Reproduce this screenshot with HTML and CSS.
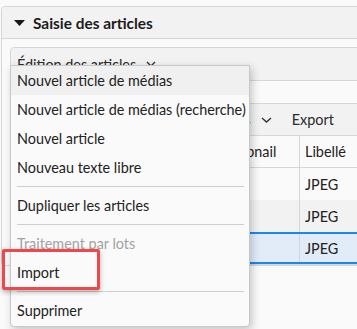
FILE: index.html
```html
<!DOCTYPE html>
<html lang="fr">
<head>
<meta charset="utf-8">
<link rel="stylesheet" href="styles.css">
</head>
<body>
<div class="panel">
  <div class="panel-head">
    <svg class="tri" width="11" height="6" viewBox="0 0 11 6"><path d="M0 0H11L5.5 6Z" fill="#1a1a1a"/></svg>
    <span class="title">Saisie des articles</span>
  </div>
  <div class="panel-body">
    <div class="grid">
      <div class="tb tb1">
        <span class="btn">Édition des articles <svg class="chev" width="10" height="6" viewBox="0 0 10 6"><path d="M1 1L5 5L9 1" fill="none" stroke="#333" stroke-width="1.4"/></svg></span>
      </div>
      <div class="tb tb2"></div>
      <div class="tb tb3">
        <span class="btn">Actions <svg class="chev" width="11" height="6" viewBox="0 0 11 6"><path d="M1 1L5.5 5L10 1" fill="none" stroke="#333" stroke-width="1.4"/></svg></span>
        <span class="btn">Export</span>
      </div>
      <div class="table">
        <div class="row head"><div class="c c1"></div><div class="c c2">Thumbnail</div><div class="c c3">Libellé</div></div>
        <div class="row"><div class="c c1"></div><div class="c c2"></div><div class="c c3">JPEG</div></div>
        <div class="row alt"><div class="c c1"></div><div class="c c2"></div><div class="c c3">JPEG</div></div>
        <div class="row sel"><div class="c c1"></div><div class="c c2"></div><div class="c c3">JPEG</div></div>
      </div>
    </div>
  </div>
</div>

<div class="menu">
  <div class="item hover">Nouvel article de médias</div>
  <div class="item">Nouvel article de médias (recherche)</div>
  <div class="item">Nouvel article</div>
  <div class="item">Nouveau texte libre</div>
  <div class="sep"></div>
  <div class="item">Dupliquer les articles</div>
  <div class="sep"></div>
  <div class="item disabled">Traitement par lots</div>
  <div class="item">Import</div>
  <div class="sep"></div>
  <div class="item">Supprimer</div>
</div>
<div class="mark"></div>
</body>
</html>
```
FILE: styles.css
```css
html, body {
  margin: 0;
  padding: 0;
}
body {
  width: 357px;
  height: 329px;
  overflow: hidden;
  background: #fafafa;
  font-family: Lato, "Open Sans", sans-serif;
  font-size: 14.4px;
  color: #222;
  position: relative;
}
.panel {
  margin: 6px 0 0 1px;
  width: 420px;
  border: 1px solid #d6d6d6;
  border-radius: 4px;
}
.panel-head {
  height: 31px;
  background: #f2f2f2;
  border-bottom: 1px solid #d6d6d6;
  border-radius: 4px 0 0 0;
  display: flex;
  align-items: center;
  padding-left: 12px;
  gap: 8px;
}
.tri { display: block; margin-top: 1px; }
.title {
  font-weight: 700;
  font-size: 15.4px;
  color: #1c1c1c;
}
.panel-body {
  padding: 8px 0 0 8px;
}
.grid {
  border: 1px solid #d6d6d6;
  border-radius: 4px 0 0 0;
}
.tb {
  display: flex;
  align-items: center;
  border-bottom: 1px solid #d6d6d6;
}
.tb1 {
  height: 32px;
  background: #f2f2f2;
  border-radius: 4px 0 0 0;
  padding-left: 6px;
}
.tb2 {
  height: 22px;
  background: #fafafa;
}
.tb3 {
  height: 31px;
  background: #f2f2f2;
  padding-left: 192px;
  gap: 20px;
}
.btn {
  display: flex;
  align-items: center;
  gap: 10px;
  color: #2a2a2a;
}
.chev { display: block; }
.row {
  display: flex;
  height: 32px;
  background: #fafafa;
}
.row.head {
  height: 31px;
  border-bottom: 1px solid #d6d6d6;
}
.row.alt { background: #f2f2f2; }
.row.sel {
  height: 28px;
  background: #e1ecf8;
  border-top: 2px solid #1a88ee;
  border-bottom: 2px solid #1a88ee;
}
.c {
  display: flex;
  align-items: center;
  box-sizing: border-box;
}
.c1 { width: 195px; }
.c2 { width: 94px; border-right: 1px solid #d6d6d6; padding-left: 4px; }
.c3 { flex: 1; padding-left: 5px; color: #222; }

.menu {
  position: absolute;
  left: 10px;
  top: 65px;
  width: 238px;
  background: #fafafa;
  border: 1px solid #c8c8c8;
  border-radius: 0 0 4px 4px;
  box-shadow: 2px 3px 8px rgba(0, 0, 0, 0.22);
  padding-bottom: 1px;
}
.item {
  height: 29px;
  display: flex;
  align-items: center;
  padding-left: 6px;
  color: #222;
  white-space: nowrap;
}
.item.hover { background: #f0f0f0; }
.item.disabled { color: #a3a3a3; }
.sep {
  height: 1px;
  background: #cfcfcf;
  margin: 4px 5px 4px 6px;
}
.mark {
  position: absolute;
  left: 2px;
  top: 249px;
  width: 98px;
  height: 41px;
  box-sizing: border-box;
  border: 3px solid #f0474a;
  border-radius: 2px;
  box-shadow: 0 2px 5px rgba(0, 0, 0, 0.3);
}
```
